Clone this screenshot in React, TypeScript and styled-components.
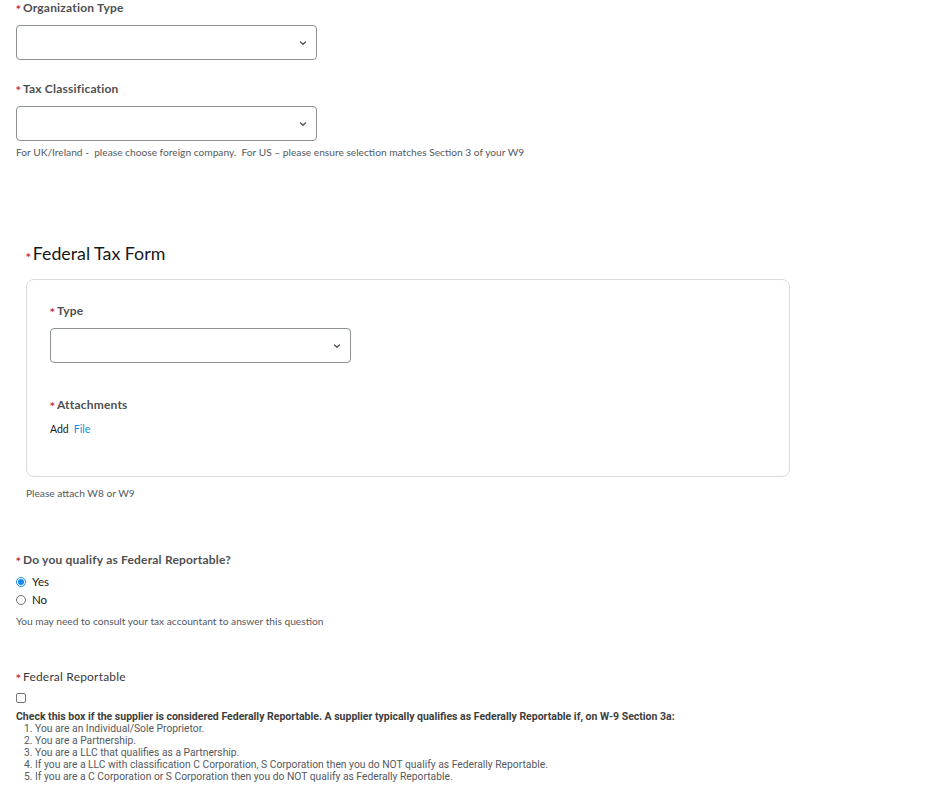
import React from "react";
import styled, { createGlobalStyle } from "styled-components";

const Global = createGlobalStyle`
  html, body { margin: 0; padding: 0; background: #fff; }
  body { font-family: Lato, "Open Sans", sans-serif; color: #3e3e3c; }
  * { box-sizing: border-box; }
`;

const Page = styled.div`
  width: 925px;
  padding: 0 16px;
  display: flex;
  flex-direction: column;
`;

const Field = styled.div<{ $mt?: number; $inset?: number }>`
  display: flex;
  flex-direction: column;
  margin-top: ${(p) => p.$mt ?? 0}px;
  padding-left: ${(p) => p.$inset ?? 0}px;
`;

const Label = styled.div<{ $weight?: number }>`
  font-size: 12px;
  letter-spacing: 0.2px;
  font-weight: ${(p) => p.$weight ?? 700};
  color: ${(p) => (p.$weight === 400 ? "#3a3a3a" : "#4f4f4f")};
  line-height: 16px;
  height: 16px;
  display: flex;
  align-items: baseline;
`;

const Star = styled.span`
  color: #c23934;
  font-size: 9px;
  line-height: 9px;
  font-weight: 700;
  margin-right: 2px;
  font-family: "DejaVu Sans", sans-serif;
`;

const SelectBox = styled.div`
  margin-top: 9px;
  width: 301px;
  height: 35px;
  border: 1px solid #8c9196;
  border-radius: 4px;
  display: flex;
  align-items: center;
  justify-content: flex-end;
  padding-right: 8px;
  color: #444;
`;

const Help = styled.div<{ $mt?: number }>`
  font-size: 10.2px;
  color: #54595e;
  line-height: 14px;
  margin-top: ${(p) => p.$mt ?? 4}px;
  white-space: pre;
`;

const Heading = styled.div`
  margin-top: 83px;
  padding-left: 10px;
  font-size: 17.8px;
  color: #181818;
  display: flex;
  align-items: baseline;
  line-height: 22px;
  height: 22px;
`;

const Card = styled.div`
  margin: 15px 0 0 10px;
  width: 764px;
  height: 198px;
  border: 1px solid #dddbda;
  border-radius: 8px;
  padding: 23px 23px;
  display: flex;
  flex-direction: column;
`;

const AddRow = styled.div`
  margin-top: 9px;
  font-size: 10.5px;
  color: #181818;
  line-height: 14px;
  display: flex;
  gap: 5px;
`;

const LinkText = styled.span`
  color: #0b93e0;
`;

const RadioGroup = styled.div`
  margin-top: 7px;
  display: flex;
  flex-direction: column;
  gap: 4px;
`;

const RadioRow = styled.label`
  display: flex;
  align-items: center;
  gap: 6px;
  font-size: 11.5px;
  color: #181818;
  line-height: 14px;
`;

const Radio = styled.span<{ $on?: boolean }>`
  width: 10px;
  height: 10px;
  border-radius: 50%;
  border: 1px solid ${(p) => (p.$on ? "#1589ee" : "#706e6b")};
  display: flex;
  align-items: center;
  justify-content: center;
  &::after {
    content: "";
    width: 6px;
    height: 6px;
    border-radius: 50%;
    background: ${(p) => (p.$on ? "#1589ee" : "transparent")};
  }
`;

const CheckBox = styled.span`
  margin-top: 8px;
  width: 10px;
  height: 10px;
  border: 1px solid #767676;
  border-radius: 2px;
`;

const Narrow = styled.div<{ $bold?: boolean; $indent?: number }>`
  font-size: ${(p) => (p.$bold ? 10.5 : 10.3)}px;
  line-height: 12px;
  font-weight: ${(p) => (p.$bold ? 700 : 400)};
  color: ${(p) => (p.$bold ? "#3e3e3c" : "#54595e")};
  padding-left: ${(p) => p.$indent ?? 0}px;
  font-family: "Liberation Sans Narrow", "Roboto", sans-serif;
  white-space: nowrap;
`;

const Desc = styled.div`
  margin-top: 8px;
  display: flex;
  flex-direction: column;
`;

const Chevron = () => (
  <svg width="10" height="10" viewBox="0 0 10 10">
    <path d="M2.5 4 L5 6.3 L7.5 4" fill="none" stroke="#555" strokeWidth="1.4" strokeLinecap="round" strokeLinejoin="round" />
  </svg>
);

const Select = () => (
  <SelectBox>
    <Chevron />
  </SelectBox>
);

const items = [
  "1. You are an Individual/Sole Proprietor.",
  "2. You are a Partnership.",
  "3. You are a LLC that qualifies as a Partnership.",
  "4. If you are a LLC with classification C Corporation, S Corporation then you do NOT qualify as Federally Reportable.",
  "5. If you are a C Corporation or S Corporation then you do NOT qualify as Federally Reportable.",
];

export default function App() {
  return (
    <>
      <Global />
      <Page>
        <Field>
          <Label><Star>*</Star>Organization Type</Label>
          <Select />
        </Field>
        <Field $mt={21}>
          <Label><Star>*</Star>Tax Classification</Label>
          <Select />
          <Help>{"For UK/Ireland -  please choose foreign company.  For US – please ensure selection matches Section 3 of your W9"}</Help>
        </Field>
        <Heading><Star>*</Star>Federal Tax Form</Heading>
        <Card>
          <Field>
            <Label><Star>*</Star>Type</Label>
            <Select />
          </Field>
          <Field $mt={34}>
            <Label><Star>*</Star>Attachments</Label>
            <AddRow>Add <LinkText>File</LinkText></AddRow>
          </Field>
        </Card>
        <Field $inset={10}>
          <Help $mt={9}>Please attach W8 or W9</Help>
        </Field>
        <Field $mt={52}>
          <Label><Star>*</Star>Do you qualify as Federal Reportable?</Label>
          <RadioGroup>
            <RadioRow><Radio $on />Yes</RadioRow>
            <RadioRow><Radio />No</RadioRow>
          </RadioGroup>
          <Help $mt={7}>You may need to consult your tax accountant to answer this question</Help>
        </Field>
        <Field $mt={41}>
          <Label $weight={400}><Star>*</Star>Federal Reportable</Label>
          <CheckBox />
          <Desc>
            <Narrow $bold>Check this box if the supplier is considered Federally Reportable. A supplier typically qualifies as Federally Reportable if, on W-9 Section 3a:</Narrow>
            {items.map((t) => (
              <Narrow key={t} $indent={8}>{t}</Narrow>
            ))}
          </Desc>
        </Field>
      </Page>
    </>
  );
}
